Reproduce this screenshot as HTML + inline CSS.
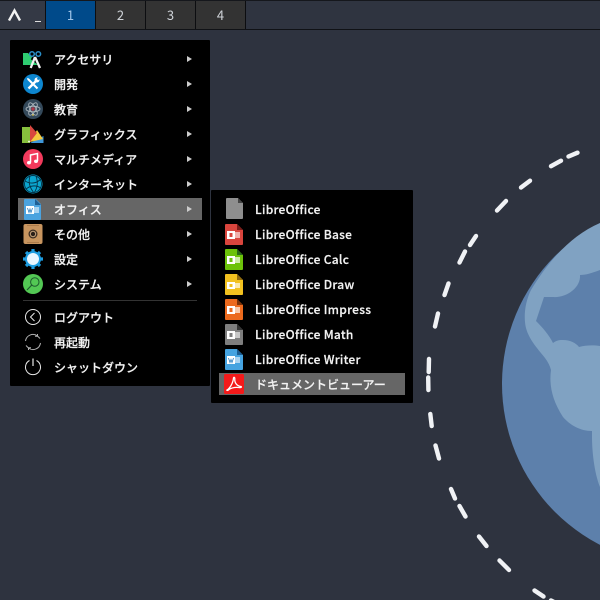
<!DOCTYPE html>
<html><head><meta charset="utf-8"><style>
html,body{margin:0;padding:0;overflow:hidden}
body{width:600px;height:600px;overflow:hidden;background:#2e333f;position:relative;font-family:"Noto Sans CJK JP","Liberation Sans",sans-serif;color:#eee;font-size:12px}
.a{position:absolute}
.ws{position:absolute;top:1px;height:28px;width:49px;background:#333;color:#cfd3d8;text-align:center;line-height:27px;font-size:13px}
.t{position:absolute;height:20px;line-height:20px;white-space:nowrap;color:#f2f2f2;font-weight:500;-webkit-text-stroke:.2px #f2f2f2}
.l{letter-spacing:.27px}
.ar{position:absolute;width:0;height:0;border-left:5px solid #ccc;border-top:3px solid transparent;border-bottom:3px solid transparent}
svg{position:absolute;overflow:hidden}
</style></head><body>
<svg style="left:0;top:0" width="600" height="600" viewBox="0 0 600 600">
<circle cx="683" cy="384" r="181" fill="#5d80ab"/>
<path fill="#80a2c2" d="M531 290C526 300 524 312 525 322C526 337 538 349 545 358C548 362 550 366 551 370C549 385 552 400 563 417C570 425 580 431 592 431L592 437C592 450 594 472 600 487V223C570 236 548 262 531 290Z"/>
<path fill="#5d80ab" d="M600 270C592 273 586 275 580 275C581 288 566 298 553 297C549 297 546 297 544 297L536 321C543 328 549 335 553 343C557 340 560 340 563 340C570 340 576 343 579 347C586 345 594 345 600 346Z"/>
<g stroke="#f0f2f5" stroke-width="4.4" stroke-linecap="round" fill="none">
<path d="M577.5 152.7L568.5 156.500M561 160.700L551 166.200M530 180.700L521 187.500M506 201L497 210.500M476 236L470 245M465 251.500L459.500 262.500M448.500 283.500L444.500 295M438 313.500L435 326.500M429 359L428.700 372M428.200 377.500L428.400 390M430.300 414L431.700 426M435.500 445.500L439 458.500M451 489L455 498.500M459.500 506L465.500 516.500M479 536.500L486.500 546M499.500 560.500L509 570M534.500 590.500L543.500 596.500M551 600.500L556 603"/>
</g>
</svg>

<div class="a" style="left:0;top:0;width:600px;height:1px;background:#15171c"></div>
<div class="a" style="left:0;top:1px;width:600px;height:28px;background:#2f3440"></div>
<div class="a" style="left:0;top:29px;width:600px;height:1px;background:#101216"></div>
<div class="a" style="left:0;top:1px;width:45px;height:28px;background:#343945"></div>
<div class="a" style="left:45px;top:1px;width:201px;height:28px;background:#0c0d10"></div>
<svg style="left:8px;top:8px" width="14" height="14" viewBox="0 0 14 14"><path d="M1 12.500L6.500 2.500L12 12.500" fill="none" stroke="#f2f2f2" stroke-width="2.400"/></svg>
<div class="a" style="left:35px;top:21px;width:6px;height:1px;background:#ddd"></div>
<div class="ws" style="left:46px;background:#004a8a;color:#9fc4e8">1</div>
<div class="ws" style="left:96px">2</div>
<div class="ws" style="left:146px">3</div>
<div class="ws" style="left:196px">4</div>

<div class="a" style="left:10px;top:40px;width:200px;height:346px;background:#000;border-radius:1px"></div>
<div class="a" style="left:18px;top:198px;width:184px;height:22px;background:#666"></div>
<div class="a" style="left:23px;top:300px;width:174px;height:1px;background:#333"></div>

<div class="t" style="left:54px;top:50px">アクセサリ</div>
<div class="t" style="left:54px;top:75px">開発</div>
<div class="t" style="left:54px;top:100px">教育</div>
<div class="t" style="left:54px;top:125px">グラフィックス</div>
<div class="t" style="left:54px;top:150px">マルチメディア</div>
<div class="t" style="left:54px;top:175px">インターネット</div>
<div class="t" style="left:54px;top:200px">オフィス</div>
<div class="t" style="left:54px;top:225px">その他</div>
<div class="t" style="left:54px;top:250px">設定</div>
<div class="t" style="left:54px;top:275px">システム</div>
<div class="t" style="left:54px;top:308px">ログアウト</div>
<div class="t" style="left:54px;top:333px">再起動</div>
<div class="t" style="left:54px;top:358px">シャットダウン</div>

<div class="ar" style="left:187px;top:56px"></div>
<div class="ar" style="left:187px;top:81px"></div>
<div class="ar" style="left:187px;top:106px"></div>
<div class="ar" style="left:187px;top:131px"></div>
<div class="ar" style="left:187px;top:156px"></div>
<div class="ar" style="left:187px;top:181px"></div>
<div class="ar" style="left:187px;top:206px"></div>
<div class="ar" style="left:187px;top:231px"></div>
<div class="ar" style="left:187px;top:256px"></div>
<div class="ar" style="left:187px;top:281px"></div>

<!-- accessories -->
<svg style="left:23px;top:49px" width="20" height="20" viewBox="0 0 20 20">
<path d="M0 4L15 16H0Z" fill="#2ecc71"/><path d="M0 4H5L9 8L5 16H0Z" fill="#2ecc71"/>
<circle cx="9" cy="5" r="2.300" fill="none" stroke="#2a8fc9" stroke-width="1.500"/><circle cx="15.300" cy="5" r="2.300" fill="none" stroke="#2a8fc9" stroke-width="1.500"/>
<path d="M12 8L7.700 19M12 8L17 19" fill="none" stroke="#f0f0f0" stroke-width="2.300"/>
</svg>
<!-- dev -->
<svg style="left:23px;top:74px" width="20" height="20" viewBox="0 0 20 20">
<circle cx="10" cy="10" r="10" fill="#0d86cf"/>
<path d="M5.500 5.500L14.500 14.500" stroke="#fff" stroke-width="2"/><path d="M14 6L5.500 14.500" stroke="#fff" stroke-width="2.400"/>
<circle cx="14" cy="6" r="2.500" fill="#fff"/><path d="M14.500 5.500L17 3" stroke="#0d86cf" stroke-width="2"/><path d="M4 4L6 4.500L6.500 6L5.500 6.500L4.500 6Z" fill="#fff"/>
</svg>
<!-- education -->
<svg style="left:23px;top:99px" width="20" height="20" viewBox="0 0 20 20">
<circle cx="10" cy="10" r="10" fill="#34495a"/>
<g fill="none" stroke="#b8c0c6" stroke-width=".8"><ellipse cx="10" cy="10" rx="7" ry="2.800"/><ellipse cx="10" cy="10" rx="7" ry="2.800" transform="rotate(60 10 10)"/><ellipse cx="10" cy="10" rx="7" ry="2.800" transform="rotate(120 10 10)"/></g>
<circle cx="10" cy="10" r="1.700" fill="#b03a4a"/><circle cx="10" cy="16" r=".9" fill="#d8c24a"/>
</svg>
<!-- graphics -->
<svg style="left:22px;top:124px" width="22" height="20" viewBox="0 0 22 20">
<path d="M8 19L21.500 12V19Z" fill="#3f97d8"/>
<path d="M8 18L15 6L21 15Z" fill="#f4c93f"/>
<path d="M8 1L15 9L8 18Z" fill="#d9473f"/>
<path d="M0 3H8V19H0Z" fill="#86bf3d"/>
<circle cx="7" cy="17.500" r=".9" fill="#fff"/>
</svg>
<!-- multimedia -->
<svg style="left:23px;top:149px" width="20" height="20" viewBox="0 0 20 20">
<circle cx="10" cy="10" r="10" fill="#f23a5c"/>
<path d="M7.500 13.500V6L14.500 4.500V12" fill="none" stroke="#fff" stroke-width="1.500"/><ellipse cx="6" cy="13.700" rx="2" ry="1.700" fill="#fff"/><ellipse cx="13" cy="12.300" rx="2" ry="1.700" fill="#fff"/>
</svg>
<!-- internet -->
<svg style="left:23px;top:174px" width="20" height="20" viewBox="0 0 20 20">
<circle cx="10" cy="10" r="9.500" fill="#0ba6cf"/>
<g fill="none" stroke="#04344a" stroke-width=".9"><circle cx="10" cy="10" r="8.500"/><path d="M2 7C7 10 13 10 18 5M3 15C8 11 13 11 18 14M7 2C5 8 7 14 11 19M13 2C15 8 15 13 11 19"/></g>
</svg>
<!-- office -->
<svg style="left:24px;top:198px" width="18" height="22" viewBox="0 0 18 22">
<path d="M0 2Q0 1 1 1H12L17 6V21Q17 22 16 22H1Q0 22 0 21Z" fill="#4ba3df"/>
<path d="M11 0L17 6V0Z" fill="#666"/><path d="M11 1L17 7H11Z" fill="#1f5f95"/>
<rect x="2" y="8" width="8" height="8" fill="#fff"/><rect x="10" y="9" width="5" height="6" fill="#a9d4f2"/>
<path d="M3.500 10L5 14.500L6 11L7 14.500L8.500 10" stroke="#2a7fc0" fill="none" stroke-width=".8"/>
</svg>
<!-- other -->
<svg style="left:23px;top:224px" width="20" height="20" viewBox="0 0 20 20">
<rect x="0.500" y="0" width="19" height="20" rx="2" fill="#c8955f"/>
<circle cx="10" cy="10" r="4.500" fill="#3c2c20"/><circle cx="10" cy="10" r="3.200" fill="#c8a47c"/><circle cx="10" cy="10" r="2.200" fill="#2a1f18"/>
<path d="M4 1.500H16M4 18.500H16" stroke="#ad7c4b"/>
</svg>
<!-- settings -->
<svg style="left:23px;top:249px" width="20" height="20" viewBox="0 0 20 20">
<circle cx="10" cy="10" r="8" fill="#1d9ce0"/>
<g stroke="#1d9ce0" stroke-width="3.200"><path d="M10 0V20M0 10H20M3 3L17 17M17 3L3 17"/></g>
<circle cx="10" cy="10" r="6" fill="#eaf6ff"/>
</svg>
<!-- system -->
<svg style="left:23px;top:274px" width="20" height="20" viewBox="0 0 20 20">
<circle cx="10" cy="10" r="10" fill="#53c854"/>
<circle cx="11.800" cy="8" r="4.200" fill="none" stroke="#1e5a2e" stroke-width="1"/><path d="M8.800 11L4 16" stroke="#1e5a2e" stroke-width="1.200"/>
</svg>
<!-- logout -->
<svg style="left:24px;top:308px" width="18" height="18" viewBox="0 0 18 18">
<circle cx="9" cy="9" r="7.500" fill="none" stroke="#e8e8e8" stroke-width="1"/><path d="M10.500 5L6.500 9L10.500 13" fill="none" stroke="#e8e8e8" stroke-width="1"/>
</svg>
<!-- restart -->
<svg style="left:24px;top:333px" width="18" height="18" viewBox="0 0 18 18">
<path d="M1.500 8A7.500 7.500 0 0 1 13.500 3L16 5.500M16.500 10A7.500 7.500 0 0 1 4.500 15L2 12.500" fill="none" stroke="#b0b0b0" stroke-width="1"/><path d="M13.500 1V3.200H11M4.500 17V14.800H7" fill="none" stroke="#b0b0b0" stroke-width="1"/>
</svg>
<!-- shutdown -->
<svg style="left:24px;top:358px" width="18" height="18" viewBox="0 0 18 18">
<path d="M5.500 2.500A7.500 7.500 0 1 0 12.500 2.500" fill="none" stroke="#e8e8e8" stroke-width="1"/><path d="M9 0.500V8" stroke="#e8e8e8" stroke-width="1.200"/>
</svg>

<div class="a" style="left:211px;top:190px;width:202px;height:213px;background:#000;border-radius:1px"></div>
<div class="a" style="left:219px;top:373px;width:186px;height:22px;background:#666"></div>
<div class="t l" style="left:255px;top:200px">LibreOffice</div>
<div class="t l" style="left:255px;top:225px">LibreOffice Base</div>
<div class="t l" style="left:255px;top:250px">LibreOffice Calc</div>
<div class="t l" style="left:255px;top:275px">LibreOffice Draw</div>
<div class="t l" style="left:255px;top:300px">LibreOffice Impress</div>
<div class="t l" style="left:255px;top:325px">LibreOffice Math</div>
<div class="t l" style="left:255px;top:350px">LibreOffice Writer</div>
<div class="t" style="left:255px;top:375px">ドキュメントビューアー</div>

<svg style="left:226px;top:198px" width="18" height="22" viewBox="0 0 18 22"><path d="M0 1Q0 0 1 0H12L17 5V20Q17 21 16 21H1Q0 21 0 20Z" fill="#8e8e8e"/><path d="M12 0L17 5H12Z" fill="#444"/></svg>
<svg style="left:225px;top:224px" width="18" height="21" viewBox="0 0 18 21"><path d="M0 1Q0 0 1 0H12L18 6V20Q18 21 17 21H1Q0 21 0 20Z" fill="#d9453d"/><path d="M12 0L18 6H12Z" fill="#7a1c18"/><rect x="2" y="7" width="8" height="8" fill="#fff"/><rect x="10" y="8" width="5" height="6" fill="#f0b0ac"/><rect x="4.500" y="9" width="3" height="4" fill="#d9453d"/></svg>
<svg style="left:225px;top:249px" width="18" height="21" viewBox="0 0 18 21"><path d="M0 1Q0 0 1 0H12L18 6V20Q18 21 17 21H1Q0 21 0 20Z" fill="#6cc20a"/><path d="M12 0L18 6H12Z" fill="#28681a"/><rect x="2" y="7" width="8" height="8" fill="#fff"/><rect x="10" y="8" width="5" height="6" fill="#cdeca8"/><rect x="4.500" y="9" width="3" height="4" fill="#6cc20a"/></svg>
<svg style="left:225px;top:274px" width="18" height="21" viewBox="0 0 18 21"><path d="M0 1Q0 0 1 0H12L18 6V20Q18 21 17 21H1Q0 21 0 20Z" fill="#f2c11f"/><path d="M12 0L18 6H12Z" fill="#8f6a0e"/><rect x="2" y="8" width="8" height="7" fill="#fff"/><rect x="10" y="9" width="5" height="5" fill="#fbe9ac"/><rect x="4.500" y="10" width="3" height="3" fill="#f2c11f"/></svg>
<svg style="left:225px;top:299px" width="18" height="21" viewBox="0 0 18 21"><path d="M0 1Q0 0 1 0H12L18 6V20Q18 21 17 21H1Q0 21 0 20Z" fill="#ec6a1d"/><path d="M12 0L18 6H12Z" fill="#7a3208"/><rect x="2" y="7" width="8" height="8" fill="#fff"/><rect x="10" y="8" width="5" height="6" fill="#f9c9a8"/><rect x="4.500" y="9" width="3" height="4" fill="#ec6a1d"/></svg>
<svg style="left:225px;top:324px" width="18" height="21" viewBox="0 0 18 21"><path d="M0 1Q0 0 1 0H12L18 6V20Q18 21 17 21H1Q0 21 0 20Z" fill="#7e7e7e"/><path d="M12 0L18 6H12Z" fill="#333"/><rect x="2" y="7" width="8" height="8" fill="#fff"/><rect x="10" y="8" width="5" height="6" fill="#c8c8c8"/><rect x="4.500" y="9" width="3" height="4" fill="#7e7e7e"/></svg>
<svg style="left:225px;top:349px" width="18" height="21" viewBox="0 0 18 21"><path d="M0 1Q0 0 1 0H12L18 6V20Q18 21 17 21H1Q0 21 0 20Z" fill="#45a3e0"/><path d="M12 0L18 6H12Z" fill="#1b5d92"/><rect x="2" y="7" width="8" height="8" fill="#fff"/><rect x="10" y="8" width="5" height="6" fill="#a9d4f2"/><path d="M3.500 9L5 13.500L6 10.500L7 13.500L8.500 9" stroke="#2a7fc0" fill="none" stroke-width=".8"/></svg>
<svg style="left:224px;top:374px" width="20" height="20" viewBox="0 0 20 20"><rect width="20" height="20" rx="1.500" fill="#f41a1a"/><path d="M3 16C5 15 9 10 9.500 4C9.500 3 11 3 10.800 5C10.500 9 13 12 17 12.500C18 13 17 14 15 13.500C11 13 8 13.500 5 15.500C3.500 17 2.500 16.500 3 16Z" fill="none" stroke="#fff" stroke-width="1.300"/></svg>
</body></html>
